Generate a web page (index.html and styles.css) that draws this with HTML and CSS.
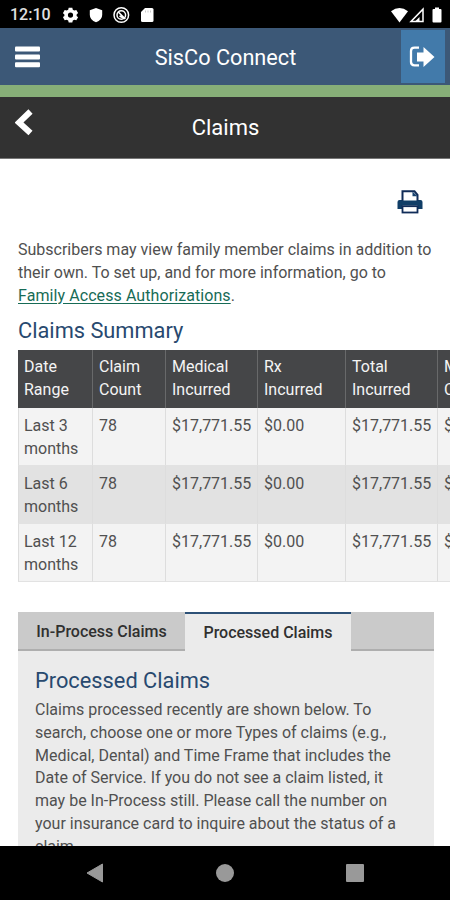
FILE: index.html
```html
<!DOCTYPE html>
<html lang="en">
<head>
<meta charset="utf-8">
<title>SisCo Connect - Claims</title>
<link rel="stylesheet" href="styles.css">
</head>
<body>
<div class="status">
  <span class="clock">12:10</span>
  <svg class="status-left" width="92" height="18" viewBox="0 0 92 18" fill="#fff">
    <g transform="translate(7.500 9)"><path fill-rule="evenodd" d="M-1.8-7.3h3.6l.5 2 1.500.9 2-.6 1.800 3.100L6.100-.6v1.500l1.500 1.300-1.800 3.100-2-.6-1.500.9-.5 1.900h-3.600l-.5-1.900-1.500-.9-2 .6-1.800-3.100 1.500-1.300v-1.500l-1.500-1.300 1.800-3.100 2 .6 1.500-.9zM0-2.500a2.600 2.600 0 1 0 0 5.200a2.600 2.600 0 0 0 0-5.200z"/></g>
    <path d="M33 2l6.200 2.200v4.600q0 5.400-6.200 7.500q-6.200-2.100-6.200-7.500V4.200z"/>
    <g fill="none" stroke="#fff"><circle cx="58.300" cy="9" r="7.300" stroke-width="1.500"/><circle cx="58.300" cy="9" r="4.300" stroke-width="1.500"/><path d="M55.300 6l7 7M56.500 10l4 2" stroke-width="1.700"/></g>
    <path d="M82 2h7q1.500 0 1.500 1.500v11q0 1.500-1.500 1.500h-9.500q-1.500 0-1.500-1.500V6z"/><path d="M82.500 4.500v2M85 4.500v2M87.500 4.500v2" stroke="#bbb" stroke-width=".8"/>
  </svg>
  <svg class="status-right" width="53" height="18" viewBox="0 0 53 18" fill="#fff">
    <path d="M2 5.200q8.500-6.500 17 0L10.500 16.500z"/>
    <path d="M22 15.500H34V3.200z" fill="none" stroke="#fff" stroke-width="1.500"/><path d="M26.500 15l4-4v4z"/>
    <path d="M44.500 3h1.500V1.500h4V3h1.500q1 0 1 1v11.500q0 1-1 1h-7q-1 0-1-1V4q0-1 1-1z"/>
  </svg>
</div>
<header class="brand">
  <svg class="menu" width="25" height="22" viewBox="0 0 25 22" fill="#fff"><rect y=".5" width="25" height="5" rx="1"/><rect y="8.500" width="25" height="5" rx="1"/><rect y="16.300" width="25" height="5" rx="1"/></svg>
  <h1>SisCo Connect</h1>
  <div class="logout"><svg width="26" height="22" viewBox="0 0 26 22"><path d="M10 1.700H5.500Q2 1.700 2 5v11q0 3.300 3.500 3.300H10" fill="none" stroke="#fff" stroke-width="2.300"/><path d="M14.500 1L25.500 11l-11 10V15.500H8v-9h6.500z" fill="#fff"/></svg></div>
</header>
<div class="page-title">
  <svg class="back" width="18" height="27" viewBox="0 0 18 27"><path d="M15.500 2.500L4 13.500l11.500 10.500" fill="none" stroke="#fff" stroke-width="6"/></svg>
  <h2>Claims</h2>
</div>
<main>
  <div class="tools"><svg width="26" height="24" viewBox="0 0 26 24"><path d="M2.500 10h21q2 0 2 2v7h-5v-4h-15v4h-5v-7q0-2 2-2z" fill="#103e67"/><path d="M5.500 11V1.300h12l3 3.500V11" fill="#fff" stroke="#102c58" stroke-width="2"/><path d="M15.500 1.500v4.700h5z" fill="#174370"/><path d="M4.500 10.500h17v5h-17z" fill="#103e67"/><rect x="5.500" y="16.200" width="15" height="6.300" fill="#fff" stroke="#102c58" stroke-width="1.800"/></svg></div>
  <p class="intro">Subscribers may view family member claims in addition to<br>their own. To set up, and for more information, go to<br><a>Family Access Authorizations</a>.</p>
  <h3>Claims Summary</h3>
  <table>
    <thead><tr><th class="c1">Date<br>Range</th><th class="c2">Claim<br>Count</th><th class="c3">Medical<br>Incurred</th><th class="c4">Rx<br>Incurred</th><th class="c5">Total<br>Incurred</th><th class="c6">Member<br>Cost</th></tr></thead>
    <tbody>
      <tr><td>Last 3<br>months</td><td>78</td><td>$17,771.55</td><td>$0.00</td><td>$17,771.55</td><td>$0.00</td></tr>
      <tr><td>Last 6<br>months</td><td>78</td><td>$17,771.55</td><td>$0.00</td><td>$17,771.55</td><td>$0.00</td></tr>
      <tr><td>Last 12<br>months</td><td>78</td><td>$17,771.55</td><td>$0.00</td><td>$17,771.55</td><td>$0.00</td></tr>
    </tbody>
  </table>
  <section class="panel">
    <div class="tabs"><div class="tab first">In-Process Claims</div><div class="tab active">Processed Claims</div><div class="tab rest"></div></div>
    <div class="panel-body">
      <h3>Processed Claims</h3>
      <p>Claims processed recently are shown below. To<br>search, choose one or more Types of claims (e.g.,<br>Medical, Dental) and Time Frame that includes the<br>Date of Service. If you do not see a claim listed, it<br>may be In-Process still. Please call the number on<br>your insurance card to inquire about the status of a<br>claim.</p>
    </div>
  </section>
</main>
<nav>
  <svg width="18" height="20" viewBox="0 0 18 20"><path d="M16.500 1v18L1 10z" fill="#999" stroke="#999" stroke-linejoin="round"/></svg>
  <i class="home"></i>
  <i class="recent"></i>
</nav>
</body>
</html>
```

FILE: styles.css
```css
* { box-sizing: border-box; }
body {
  margin: 0;
  width: 450px;
  height: 900px;
  overflow: hidden;
  display: flex;
  flex-direction: column;
  background: #fff;
  color: #505050;
  font: 16px/22.9px Roboto, sans-serif;
}
h1, h2, h3, p { margin: 0; font-weight: 400; }
svg { display: block; flex: none; }
.status { height: 28px; flex: none; background: #000; color: #e0e0e0; display: flex; align-items: center; padding: 2px 8px 0 10px; }
.clock { width: 53px; font-size: 16px; font-weight: 500; padding-top: 1px; }
.status-right { margin-left: auto; }
.brand { height: 57px; flex: none; background: #3c5877; display: grid; grid-template-columns: 49px 1fr 49px; align-items: center; }
.menu { margin-left: 15px; }
.brand h1 { text-align: center; color: #fff; font-size: 21.7px; line-height: 28px; padding: 2px 0 0 1px; }
.logout { width: 44px; height: 53px; background: #427aaa; display: flex; align-items: center; justify-content: center; padding-right: 2px; }
.page-title { height: 74px; flex: none; border-top: 12px solid #87af78; border-bottom: 1px solid #777; background: #323232; display: grid; grid-template-columns: 49px 1fr 49px; }
.back { margin: 12px 0 0 15px; }
.page-title h2 { color: #fff; text-align: center; font-size: 22px; line-height: 62px; padding-left: 1px; }
main { flex: 1; min-height: 0; overflow: hidden; padding: 31px 16px 0 18px; }
.tools { display: flex; justify-content: flex-end; height: 49px; padding-right: 11px; }
.intro { white-space: nowrap; }
.intro a { color: #176b56; text-decoration: underline; text-underline-offset: 2px; letter-spacing: .08px; }
h3 { color: #28496f; font-size: 21.8px; line-height: 28px; }
.intro + h3 { margin-top: 9px; }
table { width: 520px; table-layout: fixed; border-collapse: separate; border-spacing: 0; margin-top: 5px; }
th, td { text-align: left; vertical-align: top; font-weight: 400; padding: 6px 0 0 6px; border-right: 1px solid #ddd; white-space: nowrap; }
th { height: 58px; background: #454648; color: #f4f4f4; border-color: #68696a; }
td { height: 58px; padding-top: 7px; background: #f3f3f3; border-bottom: 1px solid #e2e2e2; }
tr:nth-child(2) td { background: #e2e2e2; }
td:first-child { border-left: 1px solid #ddd; padding-left: 5px; }
.c1 { width: 75px; }
.c2 { width: 73px; }
.c3 { width: 92px; }
.c4 { width: 88px; }
.c5 { width: 92px; }
.c6 { width: 100px; }
.panel { margin-top: 30px; background: #ebebeb; }
.tabs { display: flex; height: 39px; }
.tab { line-height: 38px; color: #303030; font-weight: 500; text-align: center; background: #cacaca; border-bottom: 2px solid #aeaeae; white-space: nowrap; }
.first { width: 167px; line-height: 40px; }
.active { width: 166px; background: #ebebeb; border-top: 2px solid #2d5177; border-bottom: 0; }
.rest { flex: 1; }
.panel-body { padding: 16px 17px 0; }
.panel-body p { white-space: nowrap; padding-top: 4px; }
nav { height: 54px; flex: none; background: #000; display: flex; align-items: center; justify-content: space-between; padding: 0 86px; }
.home { width: 18px; height: 18px; border-radius: 50%; background: #999; }
.recent { width: 18px; height: 18px; border-radius: 1px; background: #999; }
```
